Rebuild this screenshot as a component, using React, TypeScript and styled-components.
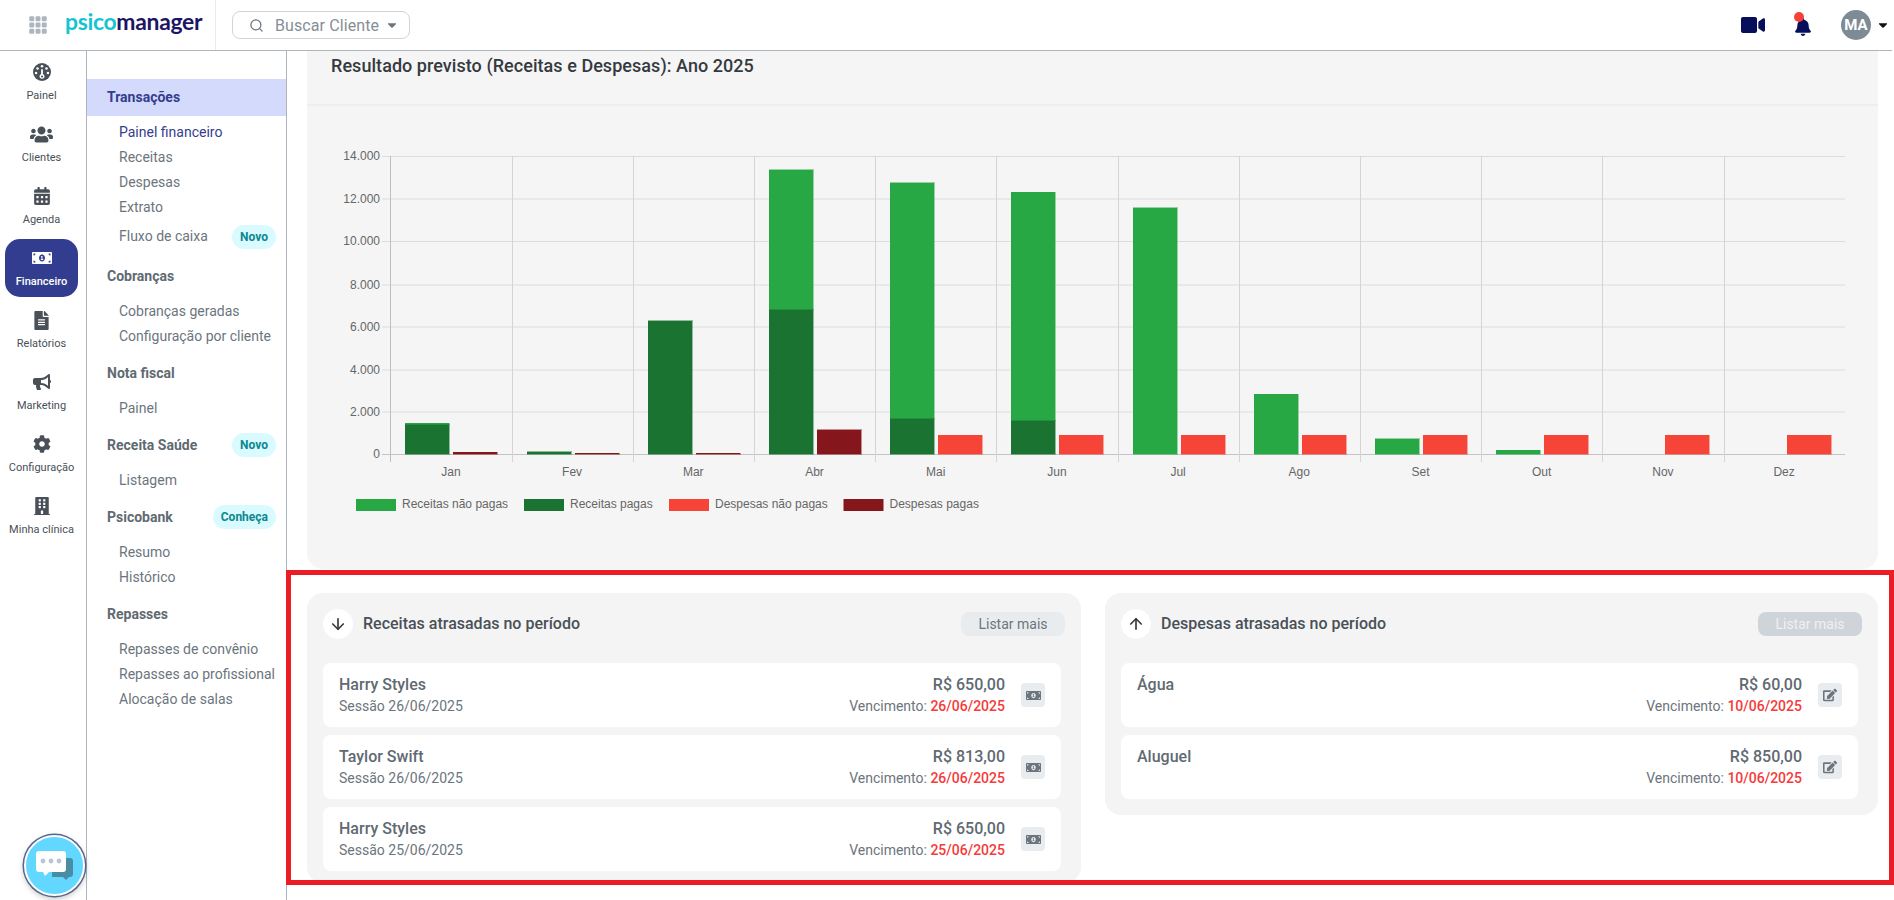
import React from 'react';
import styled, { createGlobalStyle } from 'styled-components';
import { FaUsers, FaCalendarAlt, FaMoneyBillAlt, FaFileAlt, FaBullhorn, FaCog, FaBuilding, FaEdit, FaVideo, FaBell, FaCaretDown } from 'react-icons/fa';
import { BsGrid3X3GapFill } from 'react-icons/bs';
import { Search, ArrowDown, ArrowUp } from 'lucide-react';

const Global = createGlobalStyle`
  html, body { margin: 0; padding: 0; background: #fff; height: 100%; overflow: hidden; }
  body { font-family: Roboto, "Liberation Sans", sans-serif; }
  * { box-sizing: border-box; }
`;

const Page = styled.div`
  position: relative;
  width: 1894px;
  height: 900px;
  display: flex;
  flex-direction: column;
  overflow: hidden;
  background: #fff;
`;

const Header = styled.header`
  flex: none;
  width: 1892px;
  height: 51px;
  display: flex;
  align-items: center;
  padding-left: 28px;
  border-bottom: 1px solid #adb5bd;
`;
const GridBtn = styled.span`
  display: flex;
  color: #adb5bd;
  margin-right: 17px;
`;
const Logo = styled.div`
  width: 151px;
  height: 54px;
  margin-top: -4px;
  font-family: Lato, "Open Sans", sans-serif;
  font-weight: 700;
  font-size: 22.9px;
  letter-spacing: -0.3px;
  line-height: 50px;
  color: #1c1464;
  white-space: nowrap;
  border-right: 1px solid #e9ecef;
`;
const LogoAccent = styled.span`
  color: #14c4d2;
`;
const SearchBox = styled.div`
  margin-left: 16px;
  width: 178px;
  height: 28px;
  border: 1px solid #ced4da;
  border-radius: 8px;
  display: flex;
  align-items: center;
  padding-left: 16px;
  color: #868e96;
  font-size: 16px;
`;
const SearchLabel = styled.span`
  margin-left: 11px;
  margin-right: 6px;
  letter-spacing: 0.1px;
`;
const HeaderRight = styled.div`
  margin-left: auto;
  display: flex;
  align-items: center;
  color: #070f5b;
  padding-right: 2px;
`;
const BellWrap = styled.span`
  position: relative;
  display: flex;
  margin: 4px 29px 0 29px;
`;
const BellDot = styled.span`
  position: absolute;
  left: 0;
  top: -6px;
  width: 10px;
  height: 10px;
  border-radius: 50%;
  background: #f44336;
`;
const Avatar = styled.div`
  width: 30px;
  height: 30px;
  border-radius: 50%;
  background: #7d8b96;
  color: #fff;
  font-weight: 700;
  font-size: 15px;
  display: flex;
  align-items: center;
  justify-content: center;
  margin-right: 5px;
`;

const Body = styled.div`
  flex: 1;
  display: flex;
  min-height: 0;
`;

const Rail = styled.nav`
  flex: none;
  width: 87px;
  border-right: 1px solid #adb5bd;
  padding: 2px 0 0 5px;
  display: flex;
  flex-direction: column;
  gap: 4px;
`;
const RailItem = styled.a<{ $active?: boolean }>`
  width: 73px;
  height: 58px;
  border-radius: 15px;
  display: flex;
  flex-direction: column;
  align-items: center;
  color: ${p => (p.$active ? '#fff' : '#495057')};
  background: ${p => (p.$active ? '#333d8f' : 'transparent')};
  font-size: 11px;
  font-weight: ${p => (p.$active ? 500 : 400)};
`;
const RailIcon = styled.span`
  height: 20px;
  margin-top: 9px;
  display: flex;
  align-items: center;
  justify-content: center;
`;
const RailLabel = styled.span`
  margin-top: 7px;
  line-height: 14px;
  white-space: nowrap;
`;

const SubNav = styled.nav`
  flex: none;
  width: 200px;
  border-right: 1px solid #adb5bd;
  padding-top: 28px;
  font-size: 14px;
`;
const ActiveHead = styled.div`
  height: 37px;
  line-height: 37px;
  background: #d3dafc;
  color: #343d8e;
  font-weight: 700;
  padding-left: 20px;
  margin-bottom: 4px;
`;
const NavItems = styled.div`
  display: flex;
  flex-direction: column;
`;
const NavItem = styled.a<{ $active?: boolean; $spaced?: boolean }>`
  height: 25px;
  line-height: 25px;
  padding: 0 10px 0 32px;
  color: ${p => (p.$active ? '#343d8e' : '#6c757d')};
  display: flex;
  align-items: center;
  justify-content: space-between;
  white-space: nowrap;
  margin: ${p => (p.$spaced ? '4px 0 3px' : '0')};
`;
const NavHead = styled.div`
  height: 24px;
  margin: 12px 0 11px;
  padding: 0 10px 0 20px;
  color: #5f6a72;
  font-weight: 700;
  display: flex;
  align-items: center;
  justify-content: space-between;
`;
const Badge = styled.span`
  height: 24px;
  line-height: 24px;
  border-radius: 12px;
  padding: 0 8px;
  background: #d9fbff;
  color: #0a8791;
  font-size: 12px;
  font-weight: 700;
`;

const Main = styled.main`
  flex: 1;
  min-width: 0;
  overflow: hidden;
`;
const ChartCard = styled.section`
  margin: 0 16px 0 20px;
  background: #f5f5f5;
  border-radius: 0 0 16px 16px;
`;
const ChartHead = styled.div`
  height: 55px;
  padding: 4px 0 0 24px;
  border-bottom: 2px solid #eeeeee;
`;
const ChartTitle = styled.h2`
  margin: 0;
  font-size: 18px;
  line-height: 22px;
  font-weight: 500;
  letter-spacing: 0.05px;
  color: #343a40;
`;
const ChartSvg = styled.svg`
  display: block;
  font-family: "Liberation Sans", Arial, sans-serif;
  font-size: 12px;
`;
const Lower = styled.div`
  display: grid;
  grid-template-columns: 774px 773px;
  gap: 24px;
  margin: 24px 0 0 20px;
  align-items: start;
`;
const Panel = styled.section<{ $clip?: boolean }>`
  background: #f4f4f4;
  border-radius: 16px;
  padding: 16px;
  overflow: hidden;
  max-height: ${p => (p.$clip ? '290px' : 'none')};
`;
const PanelHead = styled.div`
  height: 30px;
  display: flex;
  align-items: center;
  margin-bottom: 24px;
`;
const ArrowCircle = styled.span`
  width: 30px;
  height: 30px;
  border-radius: 50%;
  background: #fff;
  display: flex;
  align-items: center;
  justify-content: center;
  color: #343a40;
  margin-right: 10px;
`;
const PanelTitle = styled.h3`
  margin: 0 0 2px;
  font-size: 16px;
  font-weight: 500;
  color: #495057;
`;
const MoreBtn = styled.button<{ $disabled?: boolean }>`
  margin-left: auto;
  width: 104px;
  height: 24px;
  border: 0;
  border-radius: 8px;
  font-family: inherit;
  font-size: 14px;
  padding: 0;
  background: ${p => (p.$disabled ? '#ced4da' : '#e9ecef')};
  color: ${p => (p.$disabled ? '#eef0f2' : '#6c757d')};
`;
const Rows = styled.div`
  display: flex;
  flex-direction: column;
  gap: 8px;
  margin-right: 4px;
`;
const Row = styled.div`
  height: 64px;
  background: #fff;
  border-radius: 8px;
  padding: 0 16px;
  display: flex;
  align-items: center;
`;
const RowLeft = styled.div`
  flex: 1;
  align-self: flex-start;
  padding-top: 10px;
`;
const RowRight = styled.div`
  text-align: right;
  align-self: flex-start;
  padding-top: 10px;
  margin-right: 16px;
`;
const Strong = styled.div`
  font-size: 16px;
  line-height: 23px;
  font-weight: 500;
  color: #5f6a72;
`;
const Muted = styled.div`
  font-size: 14px;
  line-height: 20px;
  color: #6c757d;
`;
const Late = styled.span`
  color: #f53a3a;
  font-weight: 500;
`;
const IconBtn = styled.span`
  width: 24px;
  height: 24px;
  border-radius: 4px;
  background: #e9ecef;
  color: #6c757d;
  display: flex;
  align-items: center;
  justify-content: center;
`;

const RedFrame = styled.div`
  position: absolute;
  left: 286px;
  top: 570px;
  width: 1608px;
  height: 315px;
  border: 5px solid #ec1c24;
  pointer-events: none;
`;
const ChatBtn = styled.div`
  position: absolute;
  left: 24px;
  top: 835px;
  width: 61px;
  height: 61px;
  border-radius: 50%;
  background: #62d7ff;
  border: 2px solid #fff;
  box-shadow: 0 0 0 1.5px #56668a, 0 2px 6px rgba(0, 0, 0, 0.3);
  display: flex;
  align-items: center;
  justify-content: center;
`;

const DialIcon = () => (
  <svg width="18" height="18" viewBox="0 0 20 20">
    <circle cx="10" cy="10" r="10" fill="currentColor" />
    <g fill="#fff">
      <circle cx="10" cy="3.6" r="1.4" />
      <circle cx="5" cy="6" r="1.4" />
      <circle cx="15" cy="6" r="1.4" />
      <circle cx="3.4" cy="11" r="1.4" />
      <circle cx="16.6" cy="11" r="1.4" />
      <path d="M9 7h2v5.2a2.8 2.8 0 1 1-2 0z" />
    </g>
    <circle cx="10" cy="15" r="1.2" fill="currentColor" />
  </svg>
);

const rail = [
  { label: 'Painel', icon: <DialIcon /> },
  { label: 'Clientes', icon: <FaUsers size={23} /> },
  { label: 'Agenda', icon: <FaCalendarAlt size={18} /> },
  { label: 'Financeiro', icon: <FaMoneyBillAlt size={20} />, active: true },
  { label: 'Relatórios', icon: <FaFileAlt size={19} /> },
  { label: 'Marketing', icon: <FaBullhorn size={18} /> },
  { label: 'Configuração', icon: <FaCog size={18} /> },
  { label: 'Minha clínica', icon: <FaBuilding size={18} /> },
];

const Y0 = 454;
const X0 = 390.3;
const STEP = 121.2;
const GRID = [454, 411.5, 369.5, 326.5, 284.5, 241, 198.5, 156];
const TICKS = ['0', '2.000', '4.000', '6.000', '8.000', '10.000', '12.000', '14.000'];
const MONTHS = ['Jan', 'Fev', 'Mar', 'Abr', 'Mai', 'Jun', 'Jul', 'Ago', 'Set', 'Out', 'Nov', 'Dez'];
const GREEN = '#28a745', DGREEN = '#1b7332', RED = '#f64538', DRED = '#84161c';
const BARS: { g?: number; d?: number; r?: number; dr?: number }[] = [
  { g: 423, d: 424.5, dr: 452 },
  { d: 451.5, dr: 453 },
  { d: 320.5, dr: 453 },
  { g: 169.5, d: 309.5, dr: 429.5 },
  { g: 182.5, d: 418.5, r: 435 },
  { g: 192, d: 420.5, r: 435 },
  { g: 207.5, r: 435 },
  { g: 394, r: 435 },
  { g: 438.5, r: 435 },
  { g: 450, r: 435 },
  { r: 435 },
  { r: 435 },
];
const LEGEND = [
  { x: 356, w: 40, c: GREEN, t: 'Receitas não pagas' },
  { x: 524, w: 40, c: DGREEN, t: 'Receitas pagas' },
  { x: 669, w: 40, c: RED, t: 'Despesas não pagas' },
  { x: 843.5, w: 40, c: DRED, t: 'Despesas pagas' },
];

const Bar = ({ x, top, bottom, fill }: { x: number; top: number; bottom: number; fill: string }) => (
  <rect x={x} y={top} width={44} height={bottom - top} fill={fill} stroke={fill} strokeOpacity={0.45} strokeWidth={1} shapeRendering="crispEdges" />
);

const Chart = () => (
  <ChartSvg width={1571} height={463} viewBox="307 106 1571 463">
    {GRID.map((y, i) => (
      <g key={y}>
        <line x1={382} x2={1845} y1={y + 0.5} y2={y + 0.5} stroke={i === 0 ? '#c4c4c4' : '#dcdcdc'} />
        <text x={380} y={y + 4} textAnchor="end" fill="#666">{TICKS[i]}</text>
      </g>
    ))}
    {MONTHS.map((m, i) => {
      const x = Math.round(X0 + STEP * i) + 0.5;
      return (
        <g key={m}>
          <line x1={x} x2={x} y1={156} y2={462} stroke={i === 0 ? '#bdbdbd' : '#d4d4d4'} />
          <text x={X0 + STEP * i + STEP / 2} y={476} textAnchor="middle" fill="#666">{m}</text>
        </g>
      );
    })}
    {BARS.map((b, i) => {
      const g = Math.round(X0 + STEP * i + 15);
      const r = g + 48;
      return (
        <g key={i}>
          {b.g !== undefined && <Bar x={g} top={b.g} bottom={b.d ?? Y0} fill={GREEN} />}
          {b.d !== undefined && <Bar x={g} top={b.d} bottom={Y0} fill={DGREEN} />}
          {b.r !== undefined && <Bar x={r} top={b.r} bottom={Y0} fill={RED} />}
          {b.dr !== undefined && <Bar x={r} top={b.dr} bottom={Y0} fill={DRED} />}
        </g>
      );
    })}
    {LEGEND.map(l => (
      <g key={l.t}>
        <rect x={l.x} y={499} width={l.w} height={12} fill={l.c} />
        <text x={l.x + l.w + 6} y={508} fill="#666">{l.t}</text>
      </g>
    ))}
  </ChartSvg>
);

const ChatIcon = () => (
  <svg width="40" height="32" viewBox="0 0 40 32">
    <path d="M17 8h18a3 3 0 0 1 3 3v13a3 3 0 0 1-3 3h-1l-3 3-3-3H17z" fill="#4a8ca3" />
    <path d="M4 1h24a3 3 0 0 1 3 3v15a3 3 0 0 1-3 3H14l-4 4-2-4H4a3 3 0 0 1-3-3V4a3 3 0 0 1 3-3z" fill="#fff" />
    <circle cx="8" cy="11" r="2.4" fill="#b9c6d8" />
    <circle cx="16" cy="11" r="2.4" fill="#b9c6d8" />
    <circle cx="24" cy="11" r="2.4" fill="#b9c6d8" />
  </svg>
);

const income = [
  { name: 'Harry Styles', session: '26/06/2025', value: 'R$ 650,00', due: '26/06/2025' },
  { name: 'Taylor Swift', session: '26/06/2025', value: 'R$ 813,00', due: '26/06/2025' },
  { name: 'Harry Styles', session: '25/06/2025', value: 'R$ 650,00', due: '25/06/2025' },
];
const expenses = [
  { name: 'Água', value: 'R$ 60,00', due: '10/06/2025' },
  { name: 'Aluguel', value: 'R$ 850,00', due: '10/06/2025' },
];

export default function App() {
  return (
    <Page>
      <Global />
      <Header>
        <GridBtn><BsGrid3X3GapFill size={20} /></GridBtn>
        <Logo><LogoAccent>psico</LogoAccent>manager</Logo>
        <SearchBox>
          <Search size={15} strokeWidth={2} color="#6c757d" />
          <SearchLabel>Buscar Cliente</SearchLabel>
          <FaCaretDown size={14} color="#6c757d" />
        </SearchBox>
        <HeaderRight>
          <FaVideo size={24} />
          <BellWrap>
            <FaBell size={18} />
            <BellDot />
          </BellWrap>
          <Avatar>MA</Avatar>
          <FaCaretDown size={14} color="#111" />
        </HeaderRight>
      </Header>
      <Body>
        <Rail>
          {rail.map(r => (
            <RailItem key={r.label} $active={r.active}>
              <RailIcon>{r.icon}</RailIcon>
              <RailLabel>{r.label}</RailLabel>
            </RailItem>
          ))}
        </Rail>
        <SubNav>
          <ActiveHead>Transações</ActiveHead>
          <NavItems>
            <NavItem $active>Painel financeiro</NavItem>
            <NavItem>Receitas</NavItem>
            <NavItem>Despesas</NavItem>
            <NavItem>Extrato</NavItem>
            <NavItem $spaced>Fluxo de caixa<Badge>Novo</Badge></NavItem>
          </NavItems>
          <NavHead>Cobranças</NavHead>
          <NavItems>
            <NavItem>Cobranças geradas</NavItem>
            <NavItem>Configuração por cliente</NavItem>
          </NavItems>
          <NavHead>Nota fiscal</NavHead>
          <NavItems>
            <NavItem>Painel</NavItem>
          </NavItems>
          <NavHead>Receita Saúde<Badge>Novo</Badge></NavHead>
          <NavItems>
            <NavItem>Listagem</NavItem>
          </NavItems>
          <NavHead>Psicobank<Badge>Conheça</Badge></NavHead>
          <NavItems>
            <NavItem>Resumo</NavItem>
            <NavItem>Histórico</NavItem>
          </NavItems>
          <NavHead>Repasses</NavHead>
          <NavItems>
            <NavItem>Repasses de convênio</NavItem>
            <NavItem>Repasses ao profissional</NavItem>
            <NavItem>Alocação de salas</NavItem>
          </NavItems>
        </SubNav>
        <Main>
          <ChartCard>
            <ChartHead>
              <ChartTitle>Resultado previsto (Receitas e Despesas): Ano 2025</ChartTitle>
            </ChartHead>
            <Chart />
          </ChartCard>
          <Lower>
            <Panel $clip>
              <PanelHead>
                <ArrowCircle><ArrowDown size={18} strokeWidth={2.2} /></ArrowCircle>
                <PanelTitle>Receitas atrasadas no período</PanelTitle>
                <MoreBtn>Listar mais</MoreBtn>
              </PanelHead>
              <Rows>
                {income.map((r, i) => (
                  <Row key={i}>
                    <RowLeft>
                      <Strong>{r.name}</Strong>
                      <Muted>Sessão {r.session}</Muted>
                    </RowLeft>
                    <RowRight>
                      <Strong>{r.value}</Strong>
                      <Muted>Vencimento: <Late>{r.due}</Late></Muted>
                    </RowRight>
                    <IconBtn><FaMoneyBillAlt size={15} /></IconBtn>
                  </Row>
                ))}
              </Rows>
            </Panel>
            <Panel>
              <PanelHead>
                <ArrowCircle><ArrowUp size={18} strokeWidth={2.2} /></ArrowCircle>
                <PanelTitle>Despesas atrasadas no período</PanelTitle>
                <MoreBtn $disabled>Listar mais</MoreBtn>
              </PanelHead>
              <Rows>
                {expenses.map((r, i) => (
                  <Row key={i}>
                    <RowLeft>
                      <Strong>{r.name}</Strong>
                    </RowLeft>
                    <RowRight>
                      <Strong>{r.value}</Strong>
                      <Muted>Vencimento: <Late>{r.due}</Late></Muted>
                    </RowRight>
                    <IconBtn><FaEdit size={14} /></IconBtn>
                  </Row>
                ))}
              </Rows>
            </Panel>
          </Lower>
        </Main>
      </Body>
      <RedFrame />
      <ChatBtn><ChatIcon /></ChatBtn>
    </Page>
  );
}
